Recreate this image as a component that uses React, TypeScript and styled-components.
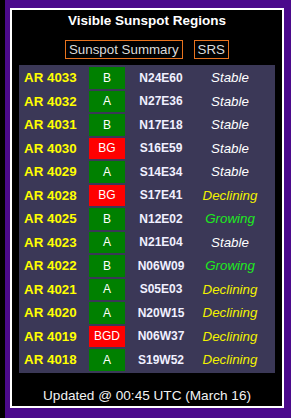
import { Fragment } from 'react'
import styled, { createGlobalStyle } from 'styled-components'

const GlobalStyle = createGlobalStyle`
  html, body {
    margin: 0;
    padding: 0;
    background: #4b0a8c;
  }
  body {
    font-family: 'Liberation Sans', Arial, sans-serif;
    font-size: 13.33px;
  }
`

type Trend = 'Stable' | 'Declining' | 'Growing'

interface Region {
  id: number
  cls: string
  loc: string
  trend: Trend
}

const regions: Region[] = [
  { id: 4033, cls: 'B', loc: 'N24E60', trend: 'Stable' },
  { id: 4032, cls: 'A', loc: 'N27E36', trend: 'Stable' },
  { id: 4031, cls: 'B', loc: 'N17E18', trend: 'Stable' },
  { id: 4030, cls: 'BG', loc: 'S16E59', trend: 'Stable' },
  { id: 4029, cls: 'A', loc: 'S14E34', trend: 'Stable' },
  { id: 4028, cls: 'BG', loc: 'S17E41', trend: 'Declining' },
  { id: 4025, cls: 'B', loc: 'N12E02', trend: 'Growing' },
  { id: 4023, cls: 'A', loc: 'N21E04', trend: 'Stable' },
  { id: 4022, cls: 'B', loc: 'N06W09', trend: 'Growing' },
  { id: 4021, cls: 'A', loc: 'S05E03', trend: 'Declining' },
  { id: 4020, cls: 'A', loc: 'N20W15', trend: 'Declining' },
  { id: 4019, cls: 'BGD', loc: 'N06W37', trend: 'Declining' },
  { id: 4018, cls: 'A', loc: 'S19W52', trend: 'Declining' },
]

const trendColors: Record<Trend, string> = {
  Stable: '#ffffff',
  Declining: '#f2f200',
  Growing: '#1eeb1e',
}

const Page = styled.div`
  display: grid;
  grid-template-columns: 5px 1fr;
  width: 291px;
  height: 418px;
`

const Strip = styled.div`
  background: #000;
`

const Frame = styled.div`
  padding: 8px 7px 10px 5px;
`

const Panel = styled.section`
  box-sizing: border-box;
  height: 400px;
  border: 2px solid #fff;
  background: #000;
  display: flex;
  flex-direction: column;
  align-items: center;
  padding-top: 3px;
`

const Title = styled.h2`
  margin: 0;
  font-size: 13.5px;
  line-height: 16px;
  font-weight: 700;
  color: #fff;
`

const Links = styled.div`
  display: flex;
  gap: 11px;
  margin-top: 11px;
`

const LinkButton = styled.span`
  border: 1px solid #e8731e;
  color: #dcdcdc;
  line-height: 15px;
  padding: 1px 3px;
`

const Table = styled.div`
  margin-top: 6px;
  width: 256px;
  box-sizing: border-box;
  background: #3b3857;
  padding: 2px;
  display: grid;
  grid-template-columns: 66px 36px 68px 76px;
  grid-auto-rows: 21.5px;
  gap: 2px;
`

const Label = styled.div`
  display: flex;
  align-items: center;
  padding-left: 3px;
  color: #ffff00;
  font-weight: 700;
`

const ClassCell = styled.div<{ $bg: string }>`
  display: flex;
  align-items: center;
  justify-content: center;
  background: ${({ $bg }) => $bg};
  color: #fff;
  font-size: 12px;
`

const Location = styled.div`
  display: flex;
  align-items: center;
  justify-content: center;
  color: #f0f0ff;
  font-size: 12px;
  font-weight: 700;
`

const TrendCell = styled.div<{ $color: string }>`
  display: flex;
  align-items: center;
  justify-content: center;
  padding-right: 10px;
  font-style: italic;
  color: ${({ $color }) => $color};
`

const Footer = styled.div`
  margin-top: 15px;
  color: #f2f2f2;
  line-height: 16px;
  font-size: 13.6px;
`

export default function App() {
  return (
    <>
      <GlobalStyle />
      <Page>
        <Strip />
        <Frame>
          <Panel>
            <Title>Visible Sunspot Regions</Title>
            <Links>
              <LinkButton>Sunspot Summary</LinkButton>
              <LinkButton>SRS</LinkButton>
            </Links>
            <Table>
              {regions.map((r) => (
                <Fragment key={r.id}>
                  <Label>AR {r.id}</Label>
                  <ClassCell $bg={r.cls.length > 1 ? '#ff0000' : '#008000'}>{r.cls}</ClassCell>
                  <Location>{r.loc}</Location>
                  <TrendCell $color={trendColors[r.trend]}>{r.trend}</TrendCell>
                </Fragment>
              ))}
            </Table>
            <Footer>Updated @ 00:45 UTC (March 16)</Footer>
          </Panel>
        </Frame>
      </Page>
    </>
  )
}
